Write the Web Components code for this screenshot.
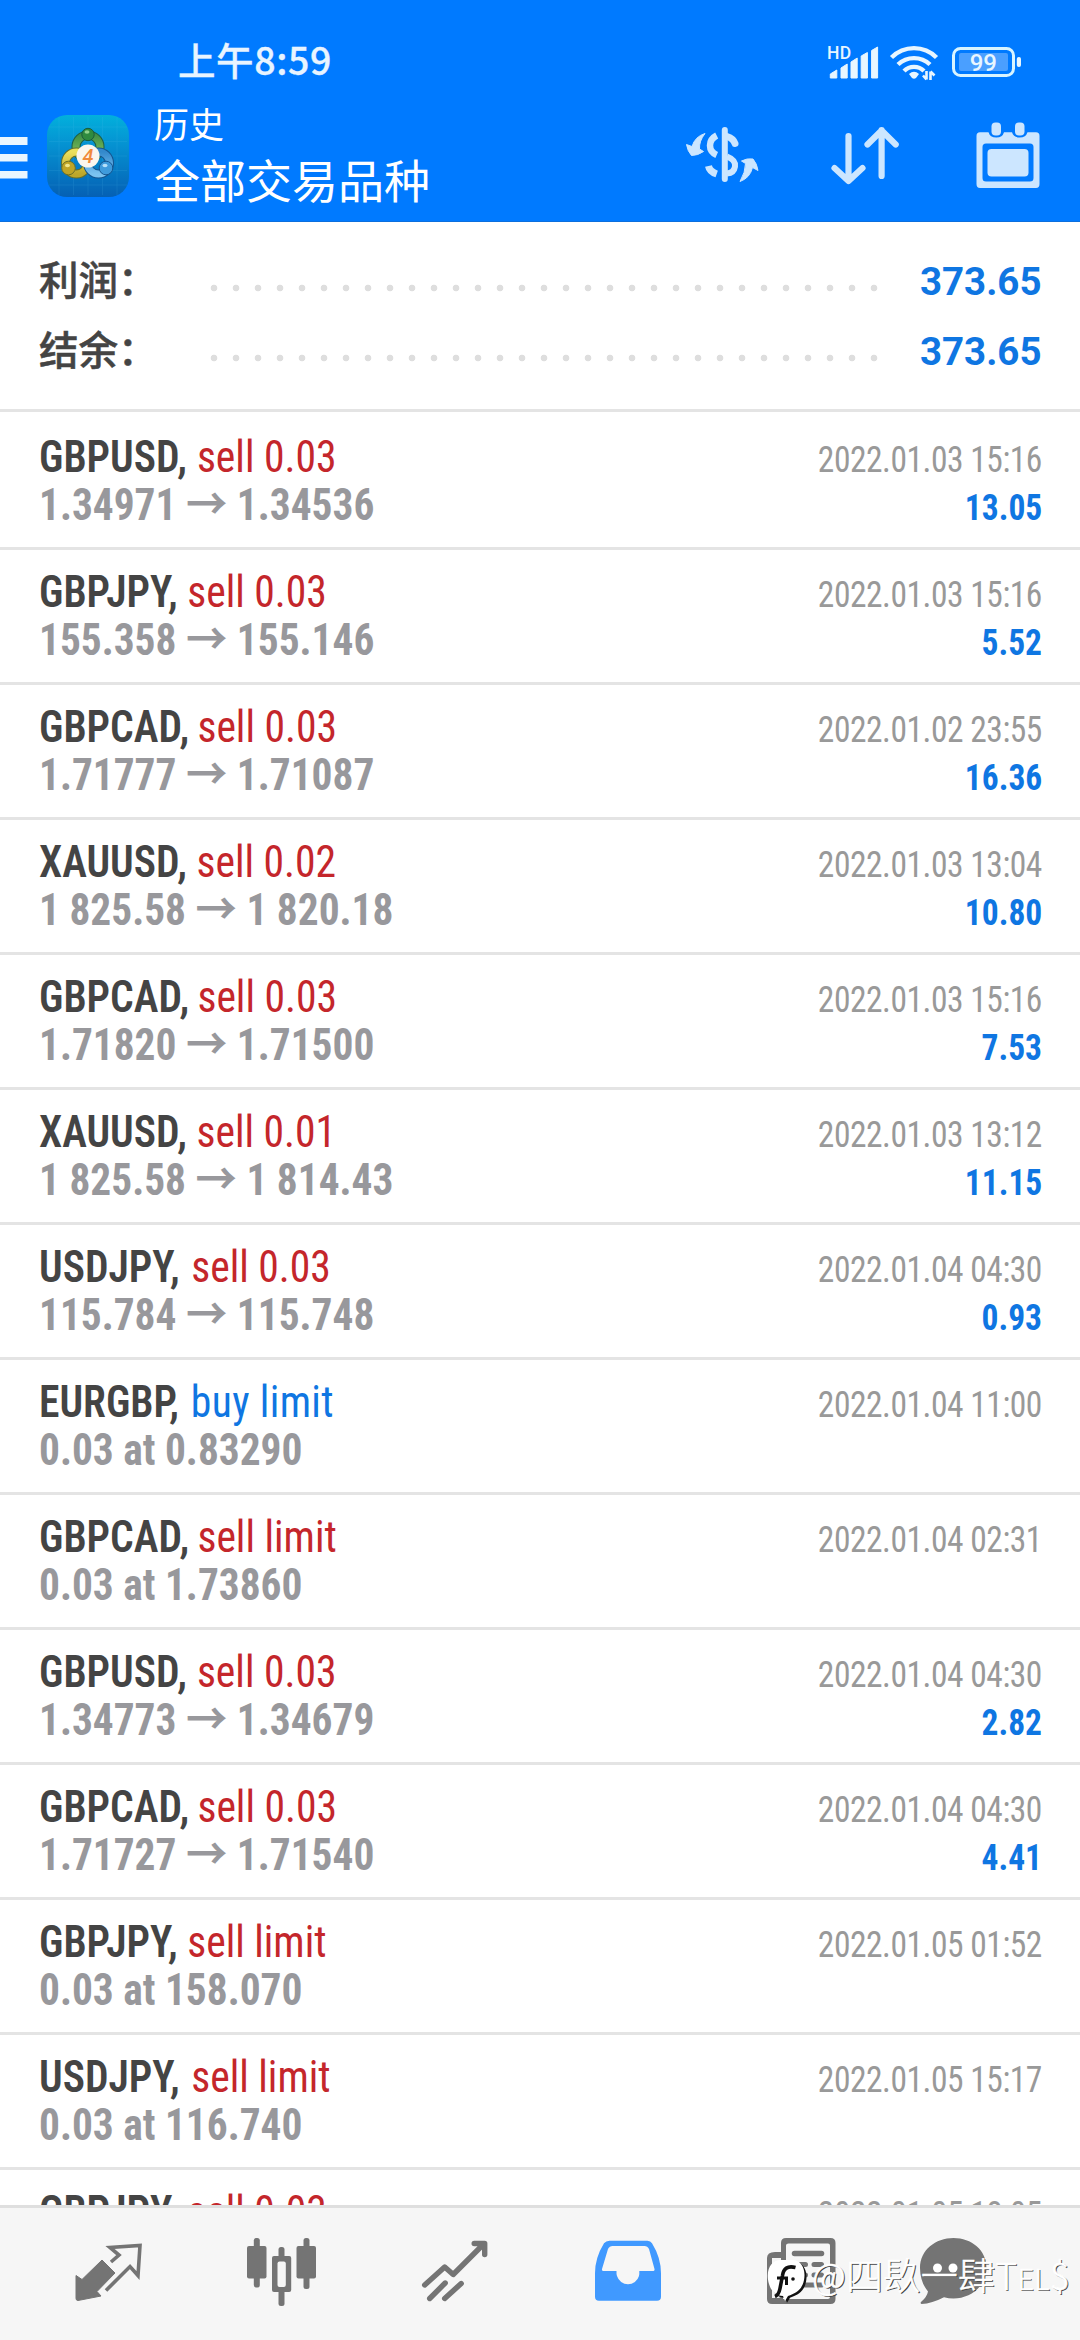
<!DOCTYPE html>
<html lang="zh-CN">
<head>
<meta charset="utf-8">
<title>历史</title>
<style>
  body { margin: 0; width: 1080px; height: 2340px; overflow: hidden; background: #fff; }
</style>
</head>
<body>
<history-app></history-app>

<template id="tpl-app">
  <style>
    :host { display: flex; flex-direction: column; width: 1080px; height: 2340px; overflow: hidden; position: relative;
      font-family: "Roboto Condensed", "Noto Sans CJK SC", sans-serif; color: #444; background: #fff; }
    app-header, account-summary, tab-bar { flex: none; }
    main { flex: 1; min-height: 0; overflow: hidden; }
    water-mark { position: absolute; left: 766px; top: 2250px; }
  </style>
  <app-header></app-header>
  <account-summary></account-summary>
  <main id="list"></main>
  <tab-bar></tab-bar>
  <water-mark></water-mark>
</template>

<template id="tpl-header">
  <style>
    :host { display: block; height: 222px; background: #007aff; box-sizing: border-box; border-bottom: 1px solid #0c6fdd;
      font-family: "Noto Sans CJK SC", sans-serif; color: #fff; overflow: hidden; }
    .status { height: 96px; display: flex; justify-content: space-between; padding: 0 55px 0 178px; box-sizing: border-box; }
    .time { font-size: 37.5px; font-weight: 500; line-height: 50px; margin-top: 34px; color: #e8f4ff; letter-spacing: .6px; -webkit-text-stroke: .3px #e8f4ff; }
    .status svg { margin-top: 40px; }
    .bar { display: flex; height: 126px; }
    .menu { margin-top: 41px; width: 28px; height: 42px; flex: none; }
    .logo { margin: 19px 0 0 19px; flex: none; }
    .titles { margin-left: 25px; margin-top: 5px; width: 532px; flex: none; }
    .sub { font-size: 35px; line-height: 44px; font-weight: 400; }
    .title { font-size: 46px; line-height: 60px; margin-top: 3px; font-weight: 400; }
    .tools { display: flex; }
  </style>
  <div class="status">
    <span class="time">上午8:59</span>
    <svg width="200" height="45" viewBox="825 40 200 45" fill="#e8f6ff">
      <text x="827" y="58.6" font-family="Roboto" font-weight="500" font-size="17.5" letter-spacing=".4">HD</text>
      <path d="M830.3 78v-4l6.5-4v8zM841 78V68l6.2-4v14zM851 78V62l6.2-4v20zM861.2 78V56l6.2-3.5V78zM871.6 78V50.500l6-3.500v31z" stroke="#e8f6ff" stroke-width="1" stroke-linejoin="round"/>
      <g fill="none" stroke="#e8f6ff" stroke-width="4.400"><path d="M891.500 57.500C904 45 924 45 936.500 57.500"/><path d="M898 64.500C907 56 921 56 930 64.500"/><path d="M904 71C909.500 65.500 918.500 65.500 924 71"/></g>
      <path d="M909 74q5-4.500 10 0l-3 4q-2 1.500-4 0z"/>
      <path d="M926.500 71v8.500M923 75.500l3.500 4M930.500 80v-8.500M934.500 75.500l-4-4" fill="none" stroke="#e8f6ff" stroke-width="2.600"/>
      <rect x="953.500" y="48.500" width="60" height="27" rx="7" fill="none" stroke="#d8f4ff" stroke-width="3"/>
      <rect x="959" y="53" width="49" height="18" rx="2" fill="#4a9fff"/>
      <rect x="1016.800" y="57" width="4.200" height="10" rx="2"/>
      <text x="983.300" y="71" text-anchor="middle" font-family="Roboto" font-weight="500" font-size="24">99</text>
    </svg>
  </div>
  <div class="bar">
    <svg class="menu" viewBox="0 0 28 42" fill="#e9f6ff"><rect y="0" width="27.500" height="8"/><rect y="17" width="27.500" height="7.500"/><rect y="34" width="27.500" height="7.500"/></svg>
    <svg class="logo" width="82" height="82" viewBox="0 0 82 82">
      <defs>
        <linearGradient id="bg" x1="0" y1="0" x2="0" y2="1"><stop offset="0" stop-color="#02b0dc"/><stop offset=".35" stop-color="#0593d2"/><stop offset="1" stop-color="#0560b4"/></linearGradient>
        <linearGradient id="g" x1="0" y1="0" x2="0" y2="1"><stop offset="0" stop-color="#3f8f45"/><stop offset="1" stop-color="#8fc962"/></linearGradient>
        <linearGradient id="y" x1="0" y1="0" x2="0" y2="1"><stop offset="0" stop-color="#ebe05c"/><stop offset="1" stop-color="#bda72a"/></linearGradient>
        <linearGradient id="b" x1="0" y1="0" x2="0" y2="1"><stop offset="0" stop-color="#3389cc"/><stop offset="1" stop-color="#7cc3f0"/></linearGradient>
      </defs>
      <rect width="82" height="82" rx="20" fill="url(#bg)"/>
      <path d="M12 2v78M26.500 2v78M41 2v78M55.500 2v78M70 2v78M2 12h78M2 26.500h78M2 41h78M2 55.500h78M2 70h78" stroke="#5cc4f0" stroke-width=".7" opacity=".18"/>
      <g fill="none">
        <circle cx="41" cy="32" r="12" stroke="#1e5f45" stroke-width="9"/><circle cx="41" cy="32" r="12" stroke="url(#g)" stroke-width="7"/>
        <circle cx="29.500" cy="48" r="11" stroke="#65702a" stroke-width="9"/><circle cx="29.500" cy="48" r="11" stroke="url(#y)" stroke-width="7"/>
        <circle cx="51.500" cy="48" r="11" stroke="#15558f" stroke-width="9"/><circle cx="51.500" cy="48" r="11" stroke="url(#b)" stroke-width="7"/>
      </g>
      <circle cx="41" cy="19.500" r="6.200" fill="#2f8a3f" stroke="#1a5a3d"/><ellipse cx="40" cy="17" rx="2.500" ry="1.700" fill="#8fd08a"/>
      <circle cx="21.500" cy="53" r="6.800" fill="#bfa526" stroke="#6b7028"/><ellipse cx="20.500" cy="50.500" rx="2.500" ry="1.700" fill="#f0e68a"/>
      <circle cx="59" cy="53" r="6.800" fill="#3f9bdc" stroke="#15558f"/><ellipse cx="58" cy="50.500" rx="2.500" ry="1.700" fill="#b5e0fa"/>
      <circle cx="41" cy="41" r="11.500" fill="#fbf6ee"/>
      <text x="41" y="48" text-anchor="middle" font-family="Roboto" font-size="20" font-weight="500" font-style="italic" fill="#f08a3c">4</text>
    </svg>
    <div class="titles">
      <div class="sub">历史</div>
      <div class="title">全部交易品种</div>
    </div>
    <div class="tools">
      <svg width="368" height="110" viewBox="686 96 368 110">
        <g fill="none" stroke="#cce6ff" stroke-width="6.200" stroke-linecap="round" stroke-linejoin="round">
          <path d="M848.500 136v44M834.500 168l14 13 14-13M881.600 176v-46M867.500 144.500l14.100-14 14.100 14"/>
          <path d="M724.800 130v49" stroke-width="6"/>
        </g>
        <g fill="none" stroke="#cce6ff" stroke-width="7">
          <path d="M716.700 135.500Q710 139 710 145.500t6.700 9.500" stroke-width="6.500"/>
          <path d="M727 136.500Q733.500 138.500 735 143.500" stroke-linecap="round"/>
          <path d="M727 156.500Q736 160 735 166.500T727 173.500" stroke-width="6"/>
          <path d="M708.500 166Q709.500 171.500 716.700 174"/>
        </g>
        <g fill="#cce6ff" stroke="#cce6ff" stroke-linejoin="round" stroke-width="1">
          <path d="M686.500 144.500l5.500 2Q695 136.500 705 133.500 699 141 699.500 149l4 2.500Q698 155.500 691.500 155.500 687.500 151 686.500 144.500z"/>
          <path d="M758 170.500l-5.500-3Q750 178 740 181.500 745.500 172 745.500 163.500l-4-2.500Q747 158 753 159 757 163.500 758 170.500z"/>
        </g>
        <path fill="#cce6ff" fill-rule="evenodd" d="M980 132.300H988.500Q990 137.500 996.300 137.500T1004 132.300H1012Q1013.500 137.500 1019.700 137.500T1027.500 132.300H1036Q1039.500 132.300 1039.500 136V184Q1039.500 188 1036 188H980Q976.500 188 976.500 184V136Q976.500 132.300 980 132.300zM986 143.500Q982.500 143.500 982.500 147V178Q982.500 181.500 986 181.500H1030Q1033.500 181.500 1033.500 178V147Q1033.500 143.500 1030 143.500z"/>
        <rect x="987.500" y="149" width="41" height="27.500" rx="4" fill="#cce6ff"/>
        <rect x="991.500" y="122.500" width="9.500" height="13" rx="4" fill="#cce6ff"/><rect x="1015" y="122.500" width="9.500" height="13" rx="4" fill="#cce6ff"/>
      </svg>
    </div>
  </div>
</template>

<template id="tpl-summary">
  <style>
    :host { display: flex; flex-direction: column; gap: 10px; height: 190px; box-sizing: border-box; padding: 26px 38.500px 0 39px; border-bottom: 3px solid #e4e4e4; }
    .row { display: flex; align-items: baseline; height: 60px; line-height: 60px; }
    .label { width: 163.500px; font: 500 39.500px/60px "Noto Sans CJK SC", sans-serif; color: #444; -webkit-text-stroke: .5px #444; }
    .dots { width: 682px; height: 8px; align-self: flex-start; margin-top: 36.300px; background: radial-gradient(circle at 11px 4px, #dedede 2.900px, transparent 3.700px) 0 0 / 22px 8px repeat-x; }
    .value { margin-left: auto; font: 700 38.500px/60px Roboto, sans-serif; color: #0f76e2; }
  </style>
  <div class="row"><span class="label">利润：</span><span class="dots"></span><span class="value">373.65</span></div>
  <div class="row"><span class="label">结余：</span><span class="dots"></span><span class="value">373.65</span></div>
</template>

<template id="tpl-deal">
  <style>
    :host { display: block; height: 135px; box-sizing: border-box; padding: 18px 38px 0 39px; border-bottom: 3px solid #e4e4e4; }
    :host([first]) { height: 138px; padding-top: 21px; }
    .line { display: flex; justify-content: space-between; align-items: baseline; height: 48px; line-height: 48px; white-space: nowrap; }
    .name, .price { font-size: 44px; transform: scaleX(.945); transform-origin: 0 50%; }
    b { font-weight: 650; color: #444; margin-right: var(--symbol-gap, 0); }
    .kind { font-weight: 420; }
    .sell { color: #c4262b; } .buy { color: #0f76e2; letter-spacing: .4px; }
    .price { font-weight: 680; color: #98989c; transform: scaleX(.94); }
    .price i { font: 700 44px/40px "Noto Sans CJK SC", sans-serif; }
    .date, .profit { font-size: 36px; transform: scaleX(.93); transform-origin: 100% 50%; }
    .date { color: #999; letter-spacing: -.500px; }
    .profit { font-weight: 700; color: #0f76e2; }
  </style>
  <div class="line"><span class="name"><b></b> <span class="kind"></span></span><span class="date"></span></div>
  <div class="line"><span class="price"></span><span class="profit"></span></div>
</template>

<template id="tpl-tabs">
  <style>
    :host { display: grid; grid-template-columns: 173px 173px 172.500px 173px 174px 129px; justify-items: center; height: 135px; box-sizing: border-box; padding-left: 22.500px; background: #f6f6f6; border-top: 3px solid #dfdfdf; }
    svg { margin-top: 22px; }
  </style>
  <svg width="76" height="80" viewBox="71 2230 76 80" fill="#747474">
    <path d="M76 2275.500l6 4 20-19.500 13 13-18 18.500 4 4.500-23 4.500q-2 0-2-2z" stroke="#747474" stroke-linejoin="round"/>
    <path d="M111 2262l8-7-9-7.500 30-2-2 30-8-9-24 24" fill="none" stroke="#747474" stroke-width="3.600"/>
  </svg>
  <svg width="76" height="80" viewBox="243.500 2230 76 80" fill="#747474">
    <rect x="246.500" y="2246" width="19.500" height="32.500" rx="2"/><rect x="253.300" y="2238" width="6" height="49.500" rx="2.500"/>
    <rect x="296" y="2246" width="19.500" height="32.500" rx="2"/><rect x="303" y="2238" width="6" height="51" rx="2.500"/>
    <rect x="278" y="2247" width="6" height="59" rx="2.500"/><rect x="271.500" y="2256" width="19.200" height="36" rx="2"/><rect x="277" y="2261.500" width="8.300" height="25.500" rx="2" fill="#f6f6f6"/>
  </svg>
  <svg width="76" height="80" viewBox="416.300 2230 76 80" fill="none" stroke="#747474" stroke-width="5.400" stroke-linecap="round" stroke-linejoin="round">
    <path d="M424 2285l20-18 8.500 7.500 31-31M473.500 2243.500h10.500v11M429 2298.500l15.500-15.500M444 2298.500l16.500-15"/>
  </svg>
  <svg width="76" height="80" viewBox="589.500 2230 76 80">
    <path d="M609 2240.800h38q3 0 4.500 2.500 9 14.500 9 30v23.500q0 4-4 4h-58q-4 0-4-4v-23.500q0-15.500 9-30 2-2.500 5.500-2.500z" fill="#4099ff"/>
    <path d="M612 2246h32q3 0 4.500 3l5.500 20q.5 2-2 2h-13.200q.2 3-.3 5a11.500 11.500 0 0 1-22 0q-.7-2-.5-5h-12.500q-2.500 0-2-2l6-20q1.500-3 4.500-3z" fill="#f6f6f6"/>
  </svg>
  <svg width="76" height="80" viewBox="763 2230 76 80">
    <path d="M775 2252q-8 0-8 6v41q0 5 5 5h58.500q5 0 5-5v-56q0-5-5-5h-44.500q-5 0-5 5v9z" fill="#747474"/>
    <path d="M788.500 2243.500h39.500q2 0 2 2v51.500q0 2-2 2h-45v-2q3-1 3-4v-47.500q0-2 2.500-2zM772 2258h9v37q0 3-3 3h-6z" fill="#f6f6f6"/>
    <path d="M794.500 2253.500h27" stroke="#747474" stroke-width="5.500" stroke-linecap="round"/>
    <path d="M794.500 2264.500h11M814 2264.500h7.500M794.500 2275h11M814 2275h7.500M794.500 2285h27" stroke="#747474" stroke-width="5" stroke-linecap="round"/>
  </svg>
  <svg width="76" height="80" viewBox="914.500 2230 76 80">
    <path d="M953 2238c18 0 33 12 33 30s-16 30.500-33 30.500q-5 0-9.500-1.200c-8 4-15.500 6.500-22.500 6.700q-1.500-.5-.5-2 6-5 7-10.500c-5-6-8-14-8-23.500 0-18 15.500-30 33.500-30z" fill="#747474"/>
    <g fill="#fff"><circle cx="937" cy="2268" r="4.500"/><circle cx="952.500" cy="2268" r="4.500"/></g>
  </svg>
</template>

<template id="tpl-mark">
  <style>
    :host { display: flex; align-items: center; height: 54px; color: #fff; font: 300 37px/54px "Noto Sans CJK SC", sans-serif; text-shadow: 1.200px 1.200px 0 #444; white-space: nowrap; }
    svg { flex: none; }
    .handle { margin: -4px 0 0 4px; letter-spacing: .350px; -webkit-text-stroke: .6px #fff; }
    .caps { font-size: 29px; }
  </style>
  <svg width="42" height="54" viewBox="766 2250 42 54">
    <path d="M769 2284c-4-14 2-24 12-24h11c10 0 14 10 12 20s-8 13-16 16l-3 5-2-5c-7 0-12-5-14-12z" fill="#111" transform="translate(2 1.800)"/>
    <path d="M769 2284c-4-14 2-24 12-24h11c10 0 14 10 12 20s-8 13-16 16l-3 5-2-5c-7 0-12-5-14-12z" fill="#fff"/>
    <path d="M795.500 2267.500c-8-2-12 1-13 8l-2.500 13c-1 5-2.500 7-5 8" fill="none" stroke="#111" stroke-width="3.600"/>
    <path d="M777 2278h9.500v7" fill="none" stroke="#111" stroke-width="3"/><circle cx="793" cy="2279" r="1.800" fill="#111"/>
  </svg>
  <span class="handle">@四镹一肆T<span class="caps">EL</span>$</span>
</template>

<script>
const stamp = (host, id) => {
  const root = host.attachShadow({ mode: 'open' });
  root.append(document.getElementById(id).content.cloneNode(true));
  return root;
};

const deals = [
  ['GBPUSD', 'sell 0.03', '1.34971 → 1.34536', '2022.01.03 15:16', '13.05'],
  ['GBPJPY', 'sell 0.03', '155.358 → 155.146', '2022.01.03 15:16', '5.52'],
  ['GBPCAD', 'sell 0.03', '1.71777 → 1.71087', '2022.01.02 23:55', '16.36'],
  ['XAUUSD', 'sell 0.02', '1 825.58 → 1 820.18', '2022.01.03 13:04', '10.80'],
  ['GBPCAD', 'sell 0.03', '1.71820 → 1.71500', '2022.01.03 15:16', '7.53'],
  ['XAUUSD', 'sell 0.01', '1 825.58 → 1 814.43', '2022.01.03 13:12', '11.15'],
  ['USDJPY', 'sell 0.03', '115.784 → 115.748', '2022.01.04 04:30', '0.93'],
  ['EURGBP', 'buy limit', '0.03 at 0.83290', '2022.01.04 11:00', ''],
  ['GBPCAD', 'sell limit', '0.03 at 1.73860', '2022.01.04 02:31', ''],
  ['GBPUSD', 'sell 0.03', '1.34773 → 1.34679', '2022.01.04 04:30', '2.82'],
  ['GBPCAD', 'sell 0.03', '1.71727 → 1.71540', '2022.01.04 04:30', '4.41'],
  ['GBPJPY', 'sell limit', '0.03 at 158.070', '2022.01.05 01:52', ''],
  ['USDJPY', 'sell limit', '0.03 at 116.740', '2022.01.05 15:17', ''],
  ['GBPJPY', 'sell 0.03', '', '2022.01.05 18:05', ''],
];

const gaps = { USDJPY: '2px', EURGBP: '2.5px', GBPUSD: '.5px', GBPCAD: '-1.5px' };

customElements.define('app-header', class extends HTMLElement {
  constructor() { super(); stamp(this, 'tpl-header'); }
});
customElements.define('account-summary', class extends HTMLElement {
  constructor() { super(); stamp(this, 'tpl-summary'); }
});
customElements.define('tab-bar', class extends HTMLElement {
  constructor() { super(); stamp(this, 'tpl-tabs'); }
});
customElements.define('water-mark', class extends HTMLElement {
  constructor() { super(); stamp(this, 'tpl-mark'); }
});
customElements.define('deal-row', class extends HTMLElement {
  constructor() { super(); this.root = stamp(this, 'tpl-deal'); }
  set deal([symbol, kind, price, date, profit]) {
    const $ = s => this.root.querySelector(s);
    $('b').textContent = symbol + ',';
    if (gaps[symbol]) $('b').style.setProperty('--symbol-gap', gaps[symbol]);
    $('.kind').textContent = kind;
    $('.kind').classList.add(kind.split(' ')[0]);
    $('.price').innerHTML = price.replace('→', '<i>→</i>');
    $('.date').textContent = date;
    $('.profit').textContent = profit;
  }
});
customElements.define('history-app', class extends HTMLElement {
  constructor() {
    super();
    const root = stamp(this, 'tpl-app');
    const list = root.getElementById('list');
    deals.forEach((d, i) => {
      const row = document.createElement('deal-row');
      row.deal = d;
      if (i === 0) row.setAttribute('first', '');
      list.append(row);
    });
  }
});
</script>
</body>
</html>
